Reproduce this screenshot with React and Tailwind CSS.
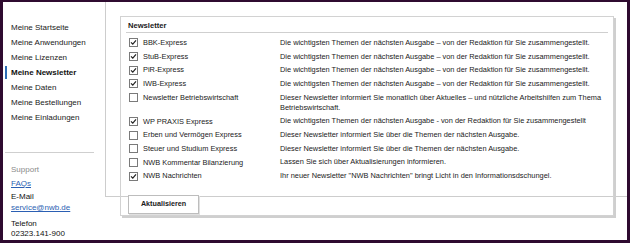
import React from "react";

const rows = [
  { label: "BBK-Express", desc: "Die wichtigsten Themen der nächsten Ausgabe – von der Redaktion für Sie zusammengestellt.", checked: true },
  { label: "StuB-Express", desc: "Die wichtigsten Themen der nächsten Ausgabe – von der Redaktion für Sie zusammengestellt.", checked: true },
  { label: "PiR-Express", desc: "Die wichtigsten Themen der nächsten Ausgabe – von der Redaktion für Sie zusammengestellt.", checked: true },
  { label: "IWB-Express", desc: "Die wichtigsten Themen der nächsten Ausgabe – von der Redaktion für Sie zusammengestellt.", checked: true },
  { label: "Newsletter Betriebswirtschaft", desc: "Dieser Newsletter informiert Sie monatlich über Aktuelles – und nützliche Arbeitshilfen zum Thema Betriebswirtschaft.", checked: false },
  { label: "WP PRAXIS Express", desc: "Die wichtigsten Themen der nächsten Ausgabe - von der Redaktion für Sie zusammengestellt", checked: true },
  { label: "Erben und Vermögen Express", desc: "Dieser Newsletter informiert Sie über die Themen der nächsten Ausgabe.", checked: false },
  { label: "Steuer und Studium Express", desc: "Dieser Newsletter informiert Sie über die Themen der nächsten Ausgabe.", checked: false },
  { label: "NWB Kommentar Bilanzierung", desc: "Lassen Sie sich über Aktualisierungen informieren.", checked: false },
  { label: "NWB Nachrichten", desc: "Ihr neuer Newsletter \"NWB Nachrichten\" bringt Licht in den Informationsdschungel.", checked: true },
];

const nav = [
  "Meine Startseite",
  "Meine Anwendungen",
  "Meine Lizenzen",
  "Meine Newsletter",
  "Meine Daten",
  "Meine Bestellungen",
  "Meine Einladungen",
];

function Box({ checked }) {
  return (
    <svg width="9" height="9" viewBox="0 0 9 9" className="block shrink-0">
      <rect x="0.5" y="0.5" width="8" height="8" fill="#fff" stroke="#7a7a7a" />
      {checked && (
        <path d="M2 4.3 L3.8 6.2 L7 2.4" fill="none" stroke="#222" strokeWidth="1.2" />
      )}
    </svg>
  );
}

export default function App() {
  return (
    <div
      className="w-[630px] h-[243px] bg-white border-[#2f0b30] border-l-[3px] border-t-2 border-r-[3px] border-b-[3px] flex items-start overflow-hidden text-[#1a1a1a]"
      style={{ fontFamily: '"Liberation Sans", Arial, sans-serif' }}
    >
      {/* Sidebar */}
      <div className="w-[102px] shrink-0 pt-[18px] text-[8px]">
        <ul className="pl-[8px]">
          {nav.map((n) => (
            <li
              key={n}
              className={
                "leading-[15px] relative " +
                (n === "Meine Newsletter" ? "font-bold text-[#111]" : "text-[#1a1a1a]")
              }
            >
              {n === "Meine Newsletter" && (
                <span className="absolute left-[-6px] top-[1px] w-[2px] h-[13px] bg-[#2d6db5]" />
              )}
              {n}
            </li>
          ))}
        </ul>
        <div className="ml-[2px] w-[89px] mt-[27px] border-t border-[#cfcfcf]" />
        <div className="pl-[8px]">
          <div className="mt-[11px] leading-[12px] text-[#8a8a8a]">Support</div>
          <div className="mt-[2px] leading-[12px]">
            <span className="text-[#2b5fb3] underline">FAQs</span>
          </div>
          <div className="mt-[2px] leading-[10px] text-[#111]">E-Mail</div>
          <div className="mt-[1px] leading-[10px]">
            <span className="text-[#2b5fb3] underline">service@nwb.de</span>
          </div>
          <div className="mt-[6px] leading-[10px] text-[#111]">Telefon</div>
          <div className="leading-[10px] text-[#111]">02323.141-900</div>
        </div>
      </div>

      {/* Content */}
      <div className="flex-1 h-[195px] border-l border-b border-[#cdcdcd]">
        <div className="ml-[14px] mt-[14px] w-[494px] h-[200px] border border-[#d2d2d2] shadow-[2px_2px_0_#cfcfcf] flex flex-col">
          <div className="pl-[7px] pt-[4px] leading-[10px] text-[7.6px] font-bold text-[#1a1a1a]">
            Newsletter
          </div>
          <div className="mx-[5px] mt-[1px] border-t border-[#cfcfcf]" />
          <div className="mt-[3px] pl-[8px] text-[7.4px] text-[#1a1a1a]">
            {rows.map((r) => (
              <div key={r.label} className="flex items-start">
                <div className="h-[13.7px] flex items-center">
                  <Box checked={r.checked} />
                </div>
                <div className="ml-[5px] w-[137px] shrink-0 leading-[13.7px] whitespace-nowrap">
                  {r.label}
                </div>
                <div className="w-[330px] leading-[10px] py-[1.85px]">{r.desc}</div>
              </div>
            ))}
          </div>
          <div className="pl-[7px] mt-[6px]">
            <button className="w-[71px] h-[19px] bg-white border border-[#bdbdbd] shadow-[1px_1px_0_#e0e0e0] text-[7.2px] font-bold text-[#1a1a1a]">
              Aktualisieren
            </button>
          </div>
        </div>
      </div>
    </div>
  );
}
